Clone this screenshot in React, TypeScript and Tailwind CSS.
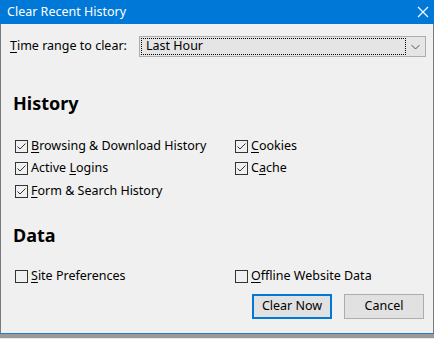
import type { ReactNode } from 'react';

const font = { fontFamily: '"Segoe UI", "Noto Sans", sans-serif' };

function U({ children }: { children: ReactNode }) {
  return <span className="underline underline-offset-2 decoration-1">{children}</span>;
}

function Check({ checked, children }: { checked?: boolean; children: ReactNode }) {
  return (
    <div className="flex h-[22.5px] items-center gap-[3px]">
      <span className="flex h-[13px] w-[13px] items-center justify-center border border-[#333] bg-[#f0f0f0]">
        {checked && (
          <svg width="11" height="11" viewBox="0 0 11 11">
            <path d="M1.5 5.5 L4 8 L9.5 2.5" fill="none" stroke="#333" strokeWidth="1" />
          </svg>
        )}
      </span>
      <span className="text-[12.5px] text-black">{children}</span>
    </div>
  );
}

export default function App() {
  return (
    <div className="flex h-[339px] w-[434px] flex-col bg-[#f0f0f0]" style={font}>
      <div className="flex h-[24px] items-center justify-between bg-[#0078d7] pl-[7px] pr-[4px] text-white">
        <span className="text-[12.5px]">Clear Recent History</span>
        <svg width="14" height="14" viewBox="0 0 14 14">
          <path d="M2 2 L12 12 M12 2 L2 12" stroke="#fff" strokeWidth="1.2" />
        </svg>
      </div>

      <div className="flex flex-1 flex-col border-x border-x-[#7a7a7a] pl-[9px] pr-[7px]">
        <div className="mt-[12px] flex items-center">
          <span className="w-[129px] text-[12.5px] text-black">
            <U>T</U>ime range to clear:
          </span>
          <div className="flex h-[21px] flex-1 items-center border border-[#adadad] bg-[#e5e5e5] p-[1px]">
            <div className="flex h-full flex-1 items-center border border-dotted border-black pl-[4px] text-[12.5px] text-black">
              Last Hour
            </div>
            <div className="flex w-[18px] items-center justify-center">
              <svg width="9" height="6" viewBox="0 0 9 6">
                <path d="M0.5 1 L4.5 5 L8.5 1" fill="none" stroke="#555" strokeWidth="1" />
              </svg>
            </div>
          </div>
        </div>

        <div className="mt-[33px] pl-[3px] text-[18px] font-bold text-black">History</div>

        <div className="mt-[18px] grid grid-cols-[220px_1fr] pl-[5px]">
          <div className="flex flex-col">
            <Check checked>
              <U>B</U>rowsing &amp; Download History
            </Check>
            <Check checked>
              Active <U>L</U>ogins
            </Check>
            <Check checked>
              <U>F</U>orm &amp; Search History
            </Check>
          </div>
          <div className="flex flex-col">
            <Check checked>
              <U>C</U>ookies
            </Check>
            <Check checked>
              C<U>a</U>che
            </Check>
          </div>
        </div>

        <div className="mt-[19px] pl-[3px] text-[18px] font-bold text-black">Data</div>

        <div className="mt-[17px] grid grid-cols-[220px_1fr] pl-[5px]">
          <Check>
            <U>S</U>ite Preferences
          </Check>
          <Check>
            <U>O</U>ffline Website Data
          </Check>
        </div>

        <div className="mt-[6px] flex justify-end gap-[12px] pr-[2px]">
          <button className="h-[25px] w-[80px] border-2 border-[#0078d7] bg-[#e1e1e1] text-[12.5px] text-black">
            Clear Now
          </button>
          <button className="h-[25px] w-[80px] border border-[#adadad] bg-[#e1e1e1] text-[12.5px] text-black">
            Cancel
          </button>
        </div>
      </div>

      <div className="h-[1px] bg-[#2b7bc4]" />
      <div className="h-[4px] bg-[#9a9a9a]" />
      <div className="h-[1px] bg-[#e8e8e8]" />
    </div>
  );
}
